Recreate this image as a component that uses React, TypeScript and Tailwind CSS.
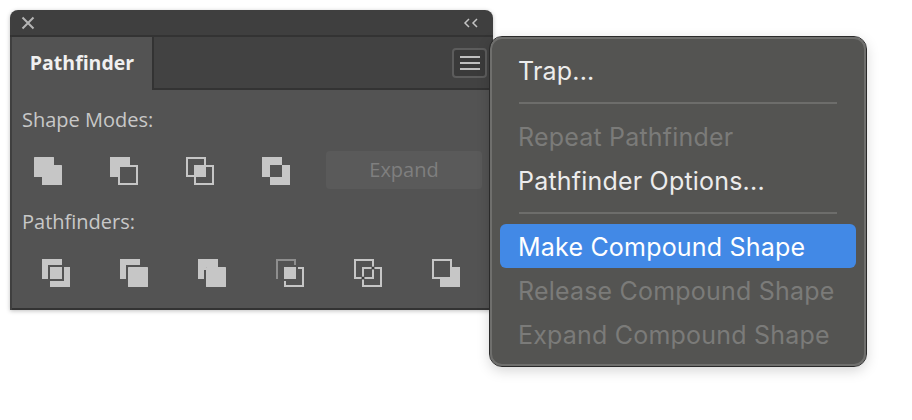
const Solid = ({ x, y }: { x: number; y: number }) => <rect x={x} y={y} width="20" height="20" rx="0.5" fill="#c6c6c6" />
const Outline = ({ x, y, color = '#c6c6c6' }: { x: number; y: number; color?: string }) => (
    <rect x={x + 1} y={y + 1} width="18" height="18" fill="none" stroke={color} strokeWidth="2" />
)

const Icon = ({ children }: { children: React.ReactNode }) => (
    <svg width="28" height="28" viewBox="0 0 28 28" className="shrink-0">
        {children}
    </svg>
)

const shapeModes = [
    <Icon key="unite">
        <Solid x={0} y={0} />
        <Solid x={8} y={8} />
    </Icon>,
    <Icon key="minus-front">
        <path d="M0 0H20V8H8V20H0Z" fill="#c6c6c6" />
        <Outline x={8} y={8} />
    </Icon>,
    <Icon key="intersect">
        <Outline x={0} y={0} />
        <Outline x={8} y={8} />
        <rect x="8" y="8" width="12" height="12" fill="#c6c6c6" />
    </Icon>,
    <Icon key="exclude">
        <path d="M0 0H20V8H8V20H0Z" fill="#c6c6c6" />
        <path d="M20 8H28V28H8V20H20Z" fill="#c6c6c6" />
    </Icon>,
]

const pathfinders = [
    <Icon key="divide">
        <path d="M0 0H20V6H6V20H0Z" fill="#c6c6c6" />
        <rect x="8" y="8" width="12" height="12" fill="#c6c6c6" />
        <path d="M22 8H28V28H8V22H22Z" fill="#c6c6c6" />
    </Icon>,
    <Icon key="trim">
        <path d="M0 0H20V6H6V20H0Z" fill="#c6c6c6" />
        <Solid x={8} y={8} />
    </Icon>,
    <Icon key="merge">
        <path d="M0 0H20V8H8V11H6V20H0Z" fill="#c6c6c6" />
        <Solid x={8} y={8} />
    </Icon>,
    <Icon key="crop">
        <path d="M1 20V1H19V6" fill="none" stroke="#8e8e8e" strokeWidth="2" />
        <rect x="8" y="8" width="12" height="12" fill="#c6c6c6" />
        <path d="M22 9H27V27H9V22" fill="none" stroke="#c6c6c6" strokeWidth="2" />
    </Icon>,
    <Icon key="outline">
        <Outline x={0} y={0} />
        <Outline x={8} y={8} />
        <circle cx="19" cy="9" r="1.6" fill="#3a3a3a" />
        <circle cx="9" cy="19" r="1.6" fill="#3a3a3a" />
    </Icon>,
    <Icon key="minus-back">
        <Outline x={0} y={0} />
        <path d="M20 8H28V28H8V20H20Z" fill="#c6c6c6" />
    </Icon>,
]

const MenuItem = ({ label, disabled }: { label: string; disabled?: boolean }) => (
    <div className={`h-11 flex items-center px-[26px] text-[25px] tracking-[0.2px] ${disabled ? 'text-[#7b7b79]' : 'text-[#ececec]'}`}>
        {label}
    </div>
)

export default function App() {
    return (
        <div className="relative w-[912px] h-[420px] overflow-hidden bg-white p-[10px]">
            {/* Pathfinder panel */}
            <div className="w-[483px] h-[300px] overflow-hidden rounded-t-[8px] bg-[#3f3f3f] shadow-[0_1px_4px_rgba(0,0,0,0.25)] font-['Open_Sans',sans-serif]">
                <div className="flex h-[27px] items-center justify-between border-b-2 border-[#333333] pl-[11px] pr-[14px]">
                    <svg width="14" height="14" viewBox="0 0 14 14">
                        <path d="M1.5 1.5L12.5 12.5M12.5 1.5L1.5 12.5" stroke="#b5b5b5" strokeWidth="2" />
                    </svg>
                    <svg width="16" height="10" viewBox="0 0 16 10">
                        <path d="M6 1L2 5L6 9M14 1L10 5L14 9" fill="none" stroke="#c4c4c4" strokeWidth="1.5" />
                    </svg>
                </div>

                <div className="mx-[2px] h-[273px] bg-[#535353] border-b-2 border-[#333333]">
                    <div className="flex h-[53px]">
                        <div className="flex w-[140px] items-center justify-center pb-[2px] text-[19.5px] font-bold text-[#f0f0f0]">
                            Pathfinder
                        </div>
                        <div className="flex flex-1 items-center justify-end border-b-2 border-l-2 border-[#333333] bg-[#424242] pr-[4px]">
                            <div className="flex h-[30px] w-[35px] flex-col items-center justify-center gap-[4px] rounded-[4px] border-2 border-[#5c5c5c] bg-[#3a3a3a]">
                                <div className="h-[2px] w-[20px] bg-[#c0c0c0]" />
                                <div className="h-[2px] w-[20px] bg-[#c0c0c0]" />
                                <div className="h-[2px] w-[20px] bg-[#c0c0c0]" />
                            </div>
                        </div>
                    </div>

                    <div className="pl-[10px] pt-[18px] text-[20px] font-medium leading-[24px] text-[#c8c8c8]">Shape Modes:</div>
                    <div className="mt-[19px] flex h-[38px] items-start pl-[22px]">
                        <div className="flex gap-[48px] pt-[6px]">{shapeModes}</div>
                        <div className="ml-[36px] flex h-[38px] w-[156px] items-center justify-center rounded-[4px] bg-[#5a5a5a] text-[20px] font-medium text-[#7f7f7f]">
                            Expand
                        </div>
                    </div>
                    <div className="mt-[21px] pl-[10px] text-[20px] font-medium leading-[24px] text-[#c8c8c8]">Pathfinders:</div>
                    <div className="mt-[25px] flex gap-[50px] pl-[30px]">{pathfinders}</div>
                </div>
            </div>

            {/* Context menu */}
            <div className="absolute left-[490px] top-[37px] h-[329px] w-[376px] rounded-[12px] border-2 border-[#6f6f6d] bg-[#545452] py-[11px] outline outline-1 outline-[#2a2a2a] shadow-[0_4px_14px_rgba(0,0,0,0.18)] font-['Inter',sans-serif]">
                <MenuItem label="Trap..." />
                <div className="mx-[27px] mt-[8px] mb-[12px] h-[2px] bg-[#6d6d6b]" />
                <MenuItem label="Repeat Pathfinder" disabled />
                <MenuItem label="Pathfinder Options..." />
                <div className="mx-[27px] mt-[8px] mb-[10px] h-[2px] bg-[#6d6d6b]" />
                <div className="mx-[8px] mb-[2px] flex h-11 items-center rounded-[6px] bg-[#4289e6] px-[18px] pt-[3px] text-[25px] tracking-[0.2px] text-white">
                    Make Compound Shape
                </div>
                <MenuItem label="Release Compound Shape" disabled />
                <MenuItem label="Expand Compound Shape" disabled />
            </div>
        </div>
    )
}
